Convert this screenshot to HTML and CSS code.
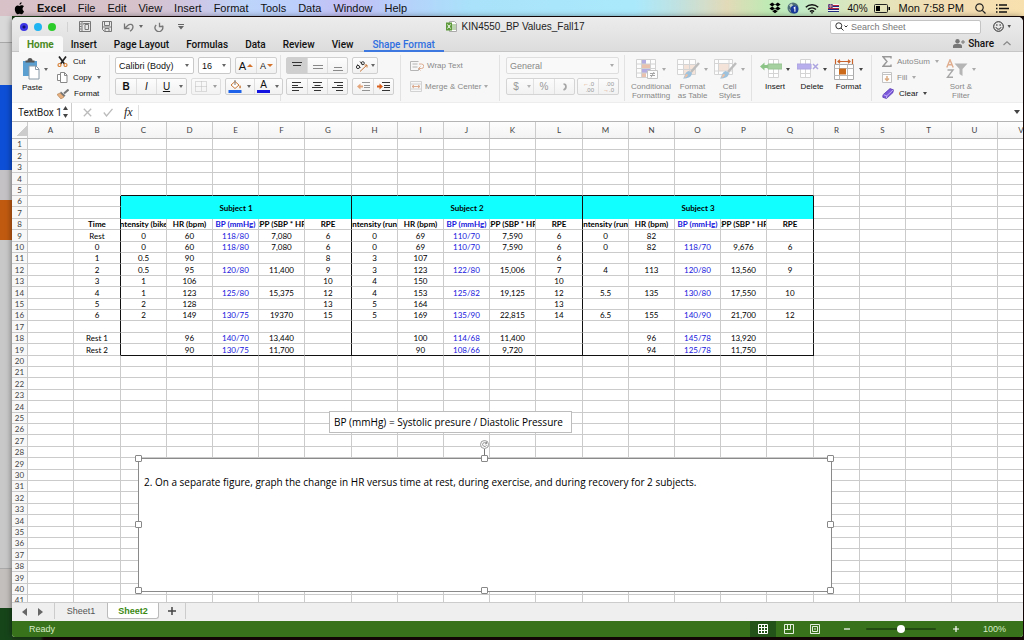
FILE: index.html
```html
<!DOCTYPE html>
<html lang="en">
<head>
<meta charset="utf-8">
<title>KIN4550_BP Values_Fall17</title>
<link rel="stylesheet" href="styles.css">
</head>
<body>
<header class="menubar">
  <svg class="apple" viewBox="0 0 12 14" width="11" height="13"><path d="M8.3 0.2c.1 1.400-1 2.700-2.300 2.700C5.900 1.600 7 .4 8.300.2zM10.900 9.900c-.6 1.700-1.700 3.400-2.800 3.400-.8 0-1.100-.5-2-.5s-1.300.5-2 .5C2.700 13.300.9 10.400.9 7.500.9 4.900 2.500 3.600 4 3.600c.9 0 1.600.6 2.100.6.600 0 1.400-.7 2.500-.7.6 0 1.600.3 2.200 1.200-2.100 1.300-1.700 4.300.1 5.200z"/></svg>
  <nav class="menus">
    <button class="menu menu-app">Excel</button><button class="menu">File</button><button class="menu">Edit</button><button class="menu">View</button><button class="menu">Insert</button><button class="menu">Format</button><button class="menu">Tools</button><button class="menu">Data</button><button class="menu">Window</button><button class="menu">Help</button>
  </nav>
  <div class="extras">
    <svg viewBox="0 0 12 12" width="12" height="12"><path d="M3.200.5 6 2.500 3.200 4.500.4 2.500zM8.800.5l2.800 2-2.800 2L6 2.500zM3.200 4.600 6 6.600 3.200 8.600.4 6.600zM8.800 4.600l2.800 2-2.800 2L6 6.600zM3.300 9.200 6 7.400l2.700 1.800L6 11.200z"/></svg>
    <svg viewBox="0 0 12 12" width="12" height="12"><circle cx="6" cy="6" r="5.500" fill="#4c6f78"/><path d="M2 3l3-1.500L6 4 4 6zM1.500 7l2 1 1 2.500z" fill="#b9cfc4"/><circle cx="7.500" cy="7.500" r="3.900" fill="#173a9c"/><path d="M6.700 6.200 7.900 5.300V9.800" stroke="#fff" stroke-width="1.100" fill="none"/></svg>
    <svg viewBox="0 0 14 11" width="14" height="11" fill="none" stroke="#111" stroke-width="1.500"><path d="M.8 4.200a9 9 0 0 1 12.400 0M3 6.500a6 6 0 0 1 8 0M5 8.600a3 3 0 0 1 4 0"/><circle cx="7" cy="9.800" r=".6" fill="#111" stroke-width=".6"/></svg>
    <svg class="flag" viewBox="0 0 11 8" width="11" height="8"><path fill="#f4f4f4" d="M0 0h11v8H0z"/><path stroke="#b8243a" d="M0 1.500h11M0 4.500h11"/><path stroke="#202a80" d="M0 2.500h11M0 5.500h11M0 7.500h11"/><path fill="#25307e" d="M0 0h5v4H0z"/><path d="M0 0l5 4M5 0 0 4M2.500 0v4M0 2h5" stroke="#d8909c" stroke-width=".7"/></svg>
    <span class="pct">40%</span>
    <svg viewBox="0 0 16 9" width="16" height="9"><rect x=".5" y=".5" width="13" height="8" rx="1" fill="none" stroke="#222"/><path d="M2 2h4v5H2zM14.500 3H16v3h-1.500z"/></svg>
    <span class="clock">Mon 7:58 PM</span>
    <svg viewBox="0 0 11 11" width="11" height="11" fill="none" stroke="#222" stroke-width="1.200"><circle cx="4.500" cy="4.500" r="3.700"/><path d="M7.300 7.300 10.500 10.500"/></svg>
    <svg class="list-icon" viewBox="0 0 13 9" width="13" height="9" stroke="#111" stroke-width="1.500"><path d="M0 1h1.500M3 1h8M0 4.500h1.500M3 4.500h10M0 8h1.500M3 8h8"/></svg>
  </div>
</header>
<main class="desktop">
<section class="window">
  <div class="titlebar">
    <div class="title-side">
      <div class="lights"><i class="light light-a"></i><i class="light light-b"></i><i class="light light-c"></i></div>
      <div class="quick">
        <svg viewBox="0 0 12 11" width="12" height="11" fill="none" stroke="#777"><path d="M.5.500h11v10H.5zM3 .5v10M4.500 3.500v-1h6M6 3.500h3.500v5H6zM1 3h1.500M1 5.500h1.500M1 8h1.500"/></svg>
        <svg viewBox="0 0 10 11" width="10" height="11" fill="none" stroke="#777"><path d="M.5.500h9v10h-7l-2-2zM2.500.500v4h5v-4M3 10.500V7.500h4v3M.5 6h9"/></svg>
        <svg viewBox="0 0 20 10" width="20" height="10" fill="none" stroke="#777" stroke-width="1.300"><path d="M1.500 1.500v5h5M1.500 6.500 5 3.200c2-1.700 5-.8 5 1.600C10 6.500 9 8 7 9.200"/><path d="M16 3h4l-2 3z" fill="#666" stroke="none"/></svg>
        <svg viewBox="0 0 10 10" width="10" height="10" fill="none" stroke="#777" stroke-width="1.300"><path d="M2.200 3A3.800 3.800 0 1 0 8 3.500M5.500.8v3.700H9.500"/></svg>
        <svg class="more" viewBox="0 0 6 6" width="6" height="6"><path d="M0 0h6v1H0zM0 2h6L3 5.500z" fill="#666"/></svg>
      </div>
    </div>
    <h1 class="doc-title"><svg viewBox="0 0 11 11" width="11" height="11"><path d="M3.500.5h5l2 2v8h-7z" fill="#fff" stroke="#aaa"/><path d="M6 4h4M6 6h4M6 8h4" stroke="#7aa860"/><path d="M0 1.500h6v8H0z" fill="#5f9b3c"/><path d="M1.500 3.500l3 4M4.500 3.500l-3 4" stroke="#fff"/></svg>KIN4550_BP Values_Fall17</h1>
    <div class="title-side title-right">
      <label class="search"><svg viewBox="0 0 13 9" width="13" height="9" fill="none" stroke="#333"><circle cx="3.800" cy="3.800" r="3"/><path d="M6 6l2.500 2.500M9.500 3.500l1.500 1.500 1.500-1.500"/></svg><input type="search" placeholder="Search Sheet" aria-label="Search Sheet"></label>
      <button class="smile" aria-label="Feedback"><svg viewBox="0 0 18 11" width="18" height="11" fill="none" stroke="#222"><circle cx="5.500" cy="5.500" r="4.800"/><path d="M3 6.200c.6 2.600 4.400 2.600 5 0"/><circle cx="3.900" cy="4" r=".4" fill="#222" stroke-width=".6"/><circle cx="7.100" cy="4" r=".4" fill="#222" stroke-width=".6"/><path d="M14.500 4h3.500l-1.800 3z" fill="#555" stroke="none"/></svg></button>
    </div>
  </div>
  <nav class="tabs">
    <button class="tab tab-active">Home</button><button class="tab">Insert</button><button class="tab">Page Layout</button><button class="tab">Formulas</button><button class="tab">Data</button><button class="tab">Review</button><button class="tab">View</button><button class="tab tab-context">Shape Format</button>
    <button class="share"><svg viewBox="0 0 12 9" width="12" height="9" fill="#777"><circle cx="4.500" cy="2.300" r="2.200"/><path d="M0 9V7c0-1.500 2-2.300 4.500-2.300S9 5.500 9 7v2z"/><path d="M10 1v4M8 3h4" stroke="#777"/></svg>Share</button>
    <button class="collapse" aria-label="Collapse ribbon"><svg viewBox="0 0 8 5" width="8" height="5"><path d="M.5 4 4 .8 7.500 4" fill="none" stroke="#888" stroke-width="1.200"/></svg></button>
  </nav>
  <div class="ribbon">
    <div class="group g-clip">
      <button class="big"><span class="pic"><svg viewBox="0 0 18 22" width="18" height="22"><path d="M1 3h14v15H1z" fill="#5b9fd0"/><path d="M3.500 4.500V2.500h2a2.500 2.500 0 0 1 5 0h2v2z" fill="#555"/><path d="M7 8h7l3 3v10H7z" fill="#fff" stroke="#8a9aa8"/><path d="M13.500 8v3.500H17" fill="none" stroke="#8a9aa8"/></svg><i class="caret"></i></span>Paste</button>
      <div class="stack">
        <button class="cmd"><svg viewBox="0 0 11 11" width="11" height="11" fill="none"><path d="M2 .5 7.500 8M9 .5 3.500 8" stroke="#222" stroke-width="1.700"/><circle cx="2.500" cy="9" r="1.500" stroke="#d8823a" stroke-width="1.200"/><circle cx="8.500" cy="9" r="1.500" stroke="#d8823a" stroke-width="1.200"/></svg>Cut</button>
        <button class="cmd"><svg viewBox="0 0 11 11" width="11" height="11" fill="#fff" stroke="#888"><path d="M.5 2.500h5v6h-5z"/><path d="M3.500.5h4l2.500 2.500v7.500H3.500zM7.500.500v3H10"/></svg>Copy<i class="caret"></i></button>
        <button class="cmd"><svg viewBox="0 0 12 10" width="12" height="10"><path d="M11.500.5 7 4.500" stroke="#777" stroke-width="2"/><path d="M4 2.500 8.500 6.500 7 8 3 4z" fill="#777"/><path d="M3 4 7 8 4 10 0 5.500z" fill="#e8b080" stroke="#a87848" stroke-width=".6"/></svg>Format</button>
      </div>
    </div>
    <div class="group g-font rows">
      <div class="line">
        <span class="pick pick-font"><select aria-label="Font"><option>Calibri (Body)</option></select><i class="caret"></i></span>
        <span class="pick pick-size"><select aria-label="Font size"><option>16</option></select><i class="caret"></i></span>
        <span class="seg"><button class="b20" aria-label="Grow font"><b class="grow">A</b><i class="up"></i></button><button class="b20" aria-label="Shrink font"><b class="shrink">A</b><i class="down"></i></button></span>
      </div>
      <div class="line">
        <span class="seg"><button class="b20"><b>B</b></button><button class="b20"><em>I</em></button><button class="b20"><u>U</u></button><button class="b9" aria-label="Underline style"><i class="caret"></i></button></span>
        <span class="seg faded"><button class="b18" aria-label="Borders"><svg viewBox="0 0 12 11" width="12" height="11" fill="none" stroke="#999" stroke-dasharray="1 1"><path d="M.5.500h11v10H.5zM6.500.500v10M.5 5.500h11"/></svg></button><button class="b9" aria-label="Border style"><i class="caret"></i></button></span>
        <span class="seg"><button class="b18" aria-label="Fill color"><svg viewBox="0 0 14 13" width="14" height="13"><path d="M3 5 7 1.500l4 3.500-4 3.500z" fill="#fff" stroke="#c87838"/><path d="M7 0v5" stroke="#777"/><path d="M12 5c1.500 2 1 3 0 3.500-1-.5-1-2 0-3.500z" fill="#c87838"/><path fill="#1d62e8" d="M.5 10h13v3H.5z"/></svg></button><button class="b9" aria-label="Fill options"><i class="caret"></i></button><button class="b18" aria-label="Font color"><span class="fontcolor">A</span></button><button class="b9" aria-label="Color options"><i class="caret"></i></button></span>
      </div>
    </div>
    <div class="group g-align rows">
      <div class="line">
        <span class="seg"><button class="b20 pressed" aria-label="Top align"><svg viewBox="0 0 10 12" width="10" height="12" stroke="#333"><path d="M0 2.500h10M1 5.500h8"/></svg></button><button class="b20" aria-label="Middle align"><svg viewBox="0 0 10 12" width="10" height="12" stroke="#888"><path d="M0 5.500h10M0 8.500h10"/></svg></button><button class="b20" aria-label="Bottom align"><svg viewBox="0 0 10 12" width="10" height="12" stroke="#888"><path d="M1 7.500h8M0 10.500h10"/></svg></button></span>
        <span class="seg"><button class="b25" aria-label="Orientation"><svg viewBox="0 0 14 12" width="14" height="12" fill="none" stroke="#333"><circle cx="3" cy="7" r="1.600"/><path d="M2.500 4.500 5.500 7.500M5 1.500 8 5"/><circle cx="7.800" cy="3.200" r="1.500"/><path d="M5 11.500 12 5M12 5v2.500M12 5H9.500" stroke="#c8783c"/></svg><i class="caret"></i></button></span>
      </div>
      <div class="line">
        <span class="seg"><button class="b20" aria-label="Align left"><svg viewBox="0 0 11 9" width="11" height="9" stroke="#333"><path d="M0 .5h9M0 3.500h6M0 5.500h11M0 8.500h7"/></svg></button><button class="b20" aria-label="Center"><svg viewBox="0 0 11 9" width="11" height="9" stroke="#333"><path d="M1 .5h9M2.500 3.500h6M0 5.500h11M2 8.500h7"/></svg></button><button class="b20" aria-label="Align right"><svg viewBox="0 0 11 9" width="11" height="9" stroke="#333"><path d="M2 .5h9M5 3.500h6M0 5.500h11M4 8.500h7"/></svg></button></span>
        <span class="seg"><button class="b20 faded" aria-label="Decrease indent"><svg viewBox="0 0 13 9" width="13" height="9" stroke="#555"><path d="M5 .5h8M7 3.500h6M7 5.500h6M5 8.500h8"/><path d="M0 4.500 3.500 1.500v2H6v2H3.500v2z" fill="#d8722c" stroke="none"/></svg></button><button class="b20" aria-label="Increase indent"><svg viewBox="0 0 13 9" width="13" height="9" stroke="#333"><path d="M5 .5h8M7 3.500h6M7 5.500h6M5 8.500h8"/><path d="M6 4.500 2.500 1.500v2H0v2h2.500v2z" fill="#d8601c" stroke="none"/></svg></button></span>
      </div>
    </div>
    <div class="group g-wrap rows dim">
      <button class="cmd tall"><svg viewBox="0 0 14 10" width="14" height="10" fill="none" stroke="#aaa"><path d="M.5.500h8M.5.500v9h8v-2M2.500 3h5M2.500 6h5"/><path d="M9 3h2.500a2 2 0 0 1 0 4.500H8.500M10.500 5.500l-2 2 2 2" stroke="#d8a080"/></svg>Wrap Text</button>
      <button class="cmd tall"><svg viewBox="0 0 12 11" width="12" height="11" fill="none" stroke="#aaa"><path d="M.5.500h11v10H.5zM.5 3h11M.5 8h11" stroke="#ccc"/><path d="M2 5.500h8M4 4 2 5.500 4 7M8 4l2 1.500L8 7" stroke="#d8a080"/></svg>Merge &amp; Center<i class="caret"></i></button>
    </div>
    <div class="group g-num rows dim">
      <div class="line"><span class="pick pick-num"><select aria-label="Number format"><option>General</option></select><i class="caret"></i></span></div>
      <div class="line"><span class="seg"><button class="b18">$</button><button class="b8" aria-label="Currency options"><i class="caret"></i></button><button class="b21">%</button><button class="b20" aria-label="Comma style"><svg viewBox="0 0 6 8" width="6" height="8"><path d="M1.500 1C4.500 1 5 5.500 1.500 7" fill="none" stroke="#888" stroke-width="1.700"/></svg></button></span>
      <span class="seg"><button class="b20 dec" aria-label="Increase decimal"><span><i class="arr">&#8592;</i>.0</span><span>.00</span></button><button class="b20 dec" aria-label="Decrease decimal"><span>.00</span><span><i class="arr">&#8594;</i>.0</span></button></span></div>
    </div>
    <div class="group g-style dim">
      <button class="big wide"><span class="pic"><svg viewBox="0 0 22 21" width="22" height="21"><path d="M.5.500h19v18H.5z" fill="#fff"/><path d="M6 1h4v4H6zM6 10h8v4H6z" fill="#a8a0e0"/><path d="M6 5h8v5H6zM6 14h4v4H6z" fill="#e8b8a0"/><path d="M.5.500h19v18H.5zM5.500.500v18M14.500.500v18M.5 5h19M.5 9.500h19M.5 14h19" fill="none" stroke="#ccc"/><path d="M11.500 11.500h10v8h-10z" fill="#fff" stroke="#bbb"/><path d="M14 14.500h5M14 16.500h5M18 13l-3 5.500" stroke="#999"/></svg><i class="caret"></i></span>Conditional<br>Formatting</button>
      <button class="big"><span class="pic"><svg viewBox="0 0 23 21" width="23" height="21"><path d="M.5.500h18v15H.5z" fill="#fff"/><path d="M6 5h12v10H6z" fill="#f4e0d4"/><path d="M.5.500h18v15H.5zM6.500.500v15M12.500.500v15M.5 5.500h18M.5 10.500h18" fill="none" stroke="#d0d0d0"/><path d="M22 4 14 13" stroke="#b4b4b4" stroke-width="2.500"/><path d="M15 13.500c0 4.500-4 6-9 6 2-2 1.500-6 5.500-7.500z" fill="#8fb8d8"/><path d="M11 15.500c0 2-2 3-4 3.500 1.500-1.500 1-3 2-4z" fill="#e8b898"/></svg><i class="caret"></i></span>Format<br>as Table</button>
      <button class="big"><span class="pic"><svg viewBox="0 0 23 21" width="23" height="21"><path d="M.5.500h18v15H.5z" fill="#fff"/><path d="M4 4h11v8H4z" fill="#f4e0d4"/><path d="M.5.500h18v15H.5zM4.500.500v15M.5 4.500h18M15 .5v15M.5 12h18" fill="none" stroke="#d0d0d0"/><path d="M22 4 14 13" stroke="#b4b4b4" stroke-width="2.500"/><path d="M15 13.500c0 4.500-4 6-9 6 2-2 1.500-6 5.500-7.500z" fill="#8fb8d8"/><path d="M11 15.500c0 2-2 3-4 3.500 1.500-1.500 1-3 2-4z" fill="#e8b898"/></svg><i class="caret"></i></span>Cell<br>Styles</button>
    </div>
    <div class="group g-cells">
      <button class="big"><span class="pic"><svg viewBox="0 0 22 20" width="22" height="20"><path d="M8.500.500h10v18h-10zM13.500.500v18M8.500 14.500h10" fill="#fff" stroke="#d4d4d4"/><path d="M8 5h14v5H8z" fill="#a5d0a0" stroke="#98c494"/><path d="M0 7.500 4.500 3.500V6H8v3H4.500v2.500z" fill="#8cc488"/></svg><i class="caret dark"></i></span>Insert</button>
      <button class="big"><span class="pic"><svg viewBox="0 0 22 20" width="22" height="20"><path d="M3.500.500h10v18h-10zM8.500.500v18M3.500 14.500h10" fill="#fff" stroke="#d4d4d4"/><path d="M0 5h14v5H0z" fill="#b8aeee" stroke="#aca4e0"/><path d="M16 5l5 5M21 5l-5 5" stroke="#aca4e0" stroke-width="1.500"/></svg><i class="caret dark"></i></span>Delete</button>
      <button class="big"><span class="pic"><svg viewBox="0 0 21 21" width="21" height="21"><path d="M.5 5.500h19v15H.5z" fill="#fff" stroke="#aaa"/><path d="M5.500 5.500v15M13.500 5.500v15M.5 9.500h19M.5 16.500h19" stroke="#bbb"/><path d="M5 9.500h7v6H5z" fill="#cc6a1c"/><path d="M1.500 0v5M18.500 0v5M4 2.500h12M6 .8 4 2.500l2 1.700M14 .8l2 1.700-2 1.700" fill="none" stroke="#c8642c" stroke-width="1.200"/></svg><i class="caret dark"></i></span>Format</button>
    </div>
    <div class="group g-edit">
      <div class="stack">
        <button class="cmd dim"><svg viewBox="0 0 10 11" width="10" height="11"><path d="M9 2.500V.8H1l4 4.700-4 4.700h8V8.500" fill="none" stroke="#888" stroke-width="1.400"/></svg>AutoSum<i class="caret"></i></button>
        <button class="cmd dim"><svg viewBox="0 0 10 11" width="10" height="11"><path d="M.5.500h9v10h-9zM.5 2.500h9" fill="#fff" stroke="#bbb"/><path d="M5 4v4M3 6.500l2 2 2-2" fill="none" stroke="#d8a070" stroke-width="1.500"/></svg>Fill<i class="caret"></i></button>
        <button class="cmd"><svg viewBox="0 0 12 11" width="12" height="11"><path d="M8 .6 11.400 1.800 11 4.500 4.500 10.500.8 9.300 1 6.800z" fill="#7c58dc" stroke="#5a3eb0" stroke-width=".8"/><path d="M1.500 6.800 4.800 7.800 11 2M4.800 7.800l-.3 2.300" stroke="#d0c4f8" stroke-width=".8" fill="none"/></svg>Clear<i class="caret dark"></i></button>
      </div>
      <button class="big dim sort"><span class="pic"><svg viewBox="0 0 22 20" width="22" height="20"><g fill="none" stroke-width="1.400"><path d="M.8 8.500 4 .8 7.200 8.500M2 5.800h4" stroke="#dca07c"/><path d="M1.500 11h5.500L1.500 18.200H7" stroke="#999"/></g><path d="M8.500 4.500h13l-5 5.500v7l-3-2v-5z" fill="#aaa"/></svg><i class="caret"></i></span>Sort &amp;<br>Filter</button>
    </div>
  </div>
  <div class="formulabar">
    <label class="namebox"><input type="text" value="TextBox 1" aria-label="Name box"><svg viewBox="0 0 5 12" width="5" height="12" fill="#444"><path d="M0 4 2.500 0 5 4zM0 8h5l-2.500 4z"/></svg></label>
    <svg viewBox="0 0 9 9" width="9" height="9" fill="none" stroke="#bbb" stroke-width="1.300"><path d="M.8.800 8.200 8.200M8.200.800.8 8.200"/></svg>
    <svg viewBox="0 0 10 9" width="10" height="9" fill="none" stroke="#bbb" stroke-width="1.300"><path d="M.8 4.500 3.500 8 9.500.800"/></svg>
    <span class="fx">fx</span>
    <input class="formula" type="text" aria-label="Formula">
    <i class="caret dark bigger"></i>
  </div>
  <div class="sheet">
    <table class="grid" id="grid"></table>
    <div class="note">BP (mmHg) = Systolic presure / Diastolic Pressure</div>
    <div class="shape">2. On a separate figure, graph the change in HR versus time at rest, during exercise, and during recovery for 2 subjects.
      <i class="h nw"></i><i class="h n"></i><i class="h ne"></i><i class="h w"></i><i class="h e"></i><i class="h sw"></i><i class="h s"></i><i class="h se"></i>
      <svg class="rotate" viewBox="0 0 9 15" width="9" height="15" fill="none" stroke="#777"><path d="M4.500 9v6"/><circle cx="4.500" cy="4.500" r="4" fill="#fff" stroke="#999"/><path d="M6.200 3.200a2 2 0 1 0 .3 2M6.500 1.800v2H4.800" stroke-width=".8"/></svg>
    </div>
  </div>
  <div class="sheettabs">
    <button class="nav" aria-label="Previous sheet"><svg viewBox="0 0 5 8" width="5" height="8"><path d="M5 0v8L0 4z" fill="#666"/></svg></button>
    <button class="nav" aria-label="Next sheet"><svg viewBox="0 0 5 8" width="5" height="8"><path d="M0 0v8l5-4z" fill="#666"/></svg></button>
    <button class="stab">Sheet1</button><button class="stab stab-on">Sheet2</button><button class="add" aria-label="Add sheet"><svg viewBox="0 0 8 8" width="8" height="8"><path d="M4 0v8M0 4h8" stroke="#444" stroke-width="1.500"/></svg></button>
  </div>
  <footer class="status">
    <span class="ready">Ready</span>
    <button class="view view-on" aria-label="Normal view"><svg viewBox="0 0 10 10" width="10" height="10" fill="none" stroke="#fff"><path d="M.5.500h9v9h-9zM3.500.500v9M6.500.500v9M.5 3.500h9M.5 6.500h9"/></svg></button>
    <button class="view" aria-label="Page layout view"><svg viewBox="0 0 10 10" width="10" height="10" fill="none" stroke="#e4eedd"><path d="M.5.500h9v9h-9zM3.500.500v5M6.500.500v5h-6"/></svg></button>
    <button class="view" aria-label="Page break view"><svg viewBox="0 0 10 10" width="10" height="10" fill="none" stroke="#e4eedd"><path d="M.5.500h9v9h-9zM2.500 2.500h5v5h-5zM4 5h2"/></svg></button>
    <button class="zoomstep" aria-label="Zoom out"><svg viewBox="0 0 6 6" width="6" height="6"><path d="M0 3h6" stroke="#fff" stroke-width="1.200"/></svg></button>
    <input class="zoom" type="range" min="0" max="200" value="100" aria-label="Zoom">
    <button class="zoomstep" aria-label="Zoom in"><svg viewBox="0 0 6 6" width="6" height="6"><path d="M0 3h6M3 0v6" stroke="#fff" stroke-width="1.200"/></svg></button>
    <span class="zoompct">100%</span>
  </footer>
</section>
</main>
<script src="grid.js"></script>
</body>
</html>
```
FILE: styles.css
```css
* { box-sizing: border-box; }
body {
  margin: 0;
  height: 100vh;
  display: flex;
  flex-direction: column;
  overflow: hidden;
  font-family: "Liberation Sans", Arial, sans-serif;
  font-size: 8px;
  color: #222;
}
button, input, select {
  font: inherit;
  color: inherit;
  background: none;
  border: 0;
  padding: 0;
  margin: 0;
  appearance: none;
  outline: 0;
}
button { display: flex; align-items: center; justify-content: center; white-space: nowrap; }
svg { flex: none; display: block; }

.menubar {
  height: 16px;
  flex: none;
  display: flex;
  align-items: center;
  padding: 0 12px 0 14px;
  font-size: 11px;
  color: #111;
  background: linear-gradient(90deg, #d9c1c8 0%, #d6c2cb 14%, #cfc6e4 19%, #bdd4fa 24%, #bccffc 29%, #c3bdf2 34%, #b9cdfa 38%, #a9e2fa 46%, #aae9fc 62%, #bfe2e2 66%, #e2dab8 71%, #bfeab4 75%, #c2ecc6 78%, #dfe6bd 84%, #f3ddb4 92%, #f8e0ae 100%);
}
.menus { display: flex; gap: 12px; margin-left: 12px; }
.menu-app { font-weight: bold; }
.extras { margin-left: auto; display: flex; align-items: center; gap: 6px; font-size: 10px; }
.flag { margin: 0 3px; }
.clock { font-size: 11px; margin: 0 5px 0 3px; }
.list-icon { margin: 0 3px 0 4px; }

.desktop {
  flex: 1;
  min-height: 0;
  padding: 1px 1px 3px 12px;
  background:
    linear-gradient(180deg, #d9d9d9 0 26px, #a8a8a8 26px 27px, #cfcfcf 27px 69px, #0d4fd6 69px 154px, #c4c2c4 154px 184px, #c05a10 184px 224px, #c8c8c8 224px 552px, #a9a9a9 552px 553px, #c2bfbd 553px 592px, #17451a 592px) 0 0 / 12px 100% no-repeat,
    linear-gradient(90deg, #1c4018 0 40px, #160606 44px);
}
.window {
  height: 100%;
  display: flex;
  flex-direction: column;
  overflow: hidden;
  border-radius: 5px 5px 3px 3px;
  background: #fff;
  box-shadow: 0 0 6px rgba(0, 0, 0, .5);
}

.titlebar {
  height: 19px;
  flex: none;
  display: grid;
  grid-template-columns: 1fr auto 1fr;
  align-items: center;
  padding: 0 12px 0 8px;
  background: linear-gradient(#ececec, #e4e4e4);
}
.title-side { display: flex; align-items: center; }
.title-right { justify-content: flex-end; }
.lights { display: flex; gap: 6px; height: 10px; width: 48px; align-items: center; border-right: 1px solid #d2d2d2; margin-right: 11px; }
.light { width: 8px; height: 8px; border-radius: 50%; }
.light-a { background: radial-gradient(#101070 0 1px, #3b35e6 2px); }
.light-b { background: #1eb4f2; }
.light-c { background: #2bcc2a; }
.quick { display: flex; align-items: center; gap: 11px; }
.more { margin-left: 3px; }
.doc-title { margin: 0; display: flex; align-items: center; gap: 4px; font-size: 10px; font-weight: normal; }
.search {
  width: 151px;
  height: 14px;
  display: flex;
  align-items: center;
  gap: 3px;
  padding: 0 4px;
  margin-right: 12px;
  background: #fff;
  border: 1px solid #c4c4c4;
  border-radius: 2px;
  font-size: 9px;
}
.search input { flex: 1; min-width: 0; }
.search input::placeholder { color: #777; opacity: 1; }

.tabs {
  height: 16px;
  flex: none;
  display: flex;
  padding: 0 12px 0 7px;
  font-family: Roboto, "Liberation Sans", sans-serif;
  font-size: 10px;
  font-weight: 500;
  color: #111;
  background: linear-gradient(#e4e4e4, #dcdcdc);
  border-bottom: 1px solid #c6c6c6;
}
.tab { padding: 0 9px 0 8px; height: 16px; }
.tab-active { color: #4a8a1e; background: #f9f9f9; border-radius: 3px 3px 0 0; font-weight: 700; }
.tab-context { color: #2f6fe0; border-bottom: 2px solid #3c78e0; padding-top: 2px; margin-left: 2px; }
.share { margin-left: auto; gap: 3px; }
.collapse { margin-left: 9px; }

.ribbon {
  height: 51px;
  flex: none;
  display: grid;
  grid-template-columns: 98px 171px 120px 99px 125px 127px 120px 1fr;
  background: #f7f7f7;
  border-bottom: 1px solid #ededed;
}
.group { display: flex; min-width: 0; margin: 3px 0; padding: 2px 0 1px 5px; border-right: 1px solid #e2e2e2; color: #111; }
.group:last-child { border-right: 0; }
.rows { flex-direction: column; gap: 4px; }
.line { display: flex; gap: 4px; }
.group.dim, .dim { color: #888; }
.dim svg, .dim .seg, .dim .arr { opacity: .85; }
.g-clip { padding-left: 10px; gap: 9px; }
.stack { display: flex; flex-direction: column; gap: 5px; margin-top: -1px; }
.cmd { justify-content: flex-start; gap: 5px; height: 11px; }
.tall { height: 17px; gap: 3px; }
.big { flex-direction: column; justify-content: flex-start; line-height: 9px; }
.pic { display: flex; align-items: center; gap: 4px; height: 24px; margin-bottom: 1px; }
.g-clip .big { align-items: flex-start; line-height: 11px; }
.caret { flex: none; width: 0; height: 0; border: 2px solid transparent; border-top: 3px solid #666; border-bottom: 0; }
.dim .caret { border-top-color: #aaa; }
.dark.caret { border-top-color: #444; }
.bigger.caret { border-width: 4px 3px 0; }
.pick {
  display: flex;
  align-items: center;
  height: 17px;
  padding: 0 4px 0 3px;
  border: 1px solid #c9c9c9;
  border-radius: 2px;
  background: #fff;
  font-size: 9px;
}
.pick select { flex: 1; min-width: 0; }
.pick-font { width: 79px; }
.pick-size { width: 33px; }
.pick-num { width: 113px; background: #f9f9f9; border-color: #dedede; }
.seg { display: flex; height: 17px; border: 1px solid #cfcfcf; border-radius: 2px; background: linear-gradient(#fdfdfd, #f1f1f1); font-size: 10px; }
.seg button { border-left: 1px solid #dedede; }
.seg button:first-child { border-left: 0; }
.seg .pressed { background: #cfcfcf; }
.seg .b9, .seg .b8 { border-left: 0; }
.b8 { width: 8px; }
.b9 { width: 10px; }
.b18 { width: 18px; }
.b20 { width: 20px; }
.b21 { width: 21px; }
.b25 { width: 24px; gap: 2px; }
.faded { opacity: .6; }
.seg .grow { font-size: 11px; font-weight: normal; }
.seg .shrink { font-size: 9px; font-weight: normal; }
.up, .down { width: 0; height: 0; border: 3px solid transparent; border-bottom: 3px solid #d4722c; border-top: 0; margin-left: 1px; }
.down { border-top: 3px solid #d4722c; border-bottom: 0; }
.fontcolor { width: 13px; line-height: 10px; border-bottom: 3px solid #1414e0; }
.seg .dec { flex-direction: column; align-items: flex-end; padding-right: 4px; font-size: 6px; line-height: 6px; }
.arr { color: #d8722c; font-style: normal; }
.g-num { padding-left: 6px; }
.g-num .line { gap: 2px; }
.g-wrap { padding-left: 9px; }
.g-style { gap: 6px; padding-left: 6px; }
.g-cells { padding-left: 8px; gap: 7px; }
.g-cells .big { line-height: 10px; }
.g-edit { padding-left: 10px; gap: 7px; }

.formulabar {
  height: 19px;
  flex: none;
  display: flex;
  align-items: center;
  gap: 11px;
  padding-right: 3px;
  border-bottom: 1px solid #b4b4b4;
  background: #fff;
}
.namebox { width: 60px; height: 18px; display: flex; align-items: center; padding: 0 3px 0 6px; border-right: 1px solid #ccc; font: 10px Roboto, Lato, sans-serif; }
.namebox input { flex: 1; min-width: 0; }
.fx { font: italic 12px "Liberation Serif", serif; border-right: 1px solid #e0e0e0; padding-right: 5px; }
.formula { flex: 1; min-width: 0; }

.sheet { flex: 1; min-height: 0; position: relative; overflow: hidden; background: #fff; font-family: Lato, "Liberation Sans", sans-serif; }
.grid { border-collapse: separate; border-spacing: 0; table-layout: fixed; width: 0; line-height: 10px; color: #000; }
.grid .rowhead { width: 16px; }
.grid .col { width: 46px; }
.grid .col-wide { width: 47px; }
.grid th, .grid td { padding: 0; height: 11px; border: 0 solid #cbcbcb; border-width: 0 1px 1px 0; text-align: center; font-weight: normal; overflow: hidden; }
.grid tr.tall-row > * { height: 12px; }
.grid thead th { height: 17px; color: #444; background: linear-gradient(#fdfdfd, #f3f3f3); border-bottom-color: #b8b8b8; }
.grid tbody th { color: #444; background: #f8f8f8; border-right-color: #c8c8c8; }
.corner { background: linear-gradient(135deg, transparent 50%, #ccc 50%) 5px 4px / 10px 10px no-repeat, #fafafa; width: 100%; height: 16px; display: block; }
.grid .v { display: flex; justify-content: center; white-space: nowrap; overflow: hidden; height: 10px; }
.grid .bp { color: #1414dc; }
.grid .hd { font-weight: bold; }
.grid .subject { background: #12ffff; font-weight: bold; border-bottom: 0; }
.grid .edge-r { border-right-color: #111; }
.grid .edge-b { border-bottom-color: #111; }
.note, .shape { position: absolute; background: #fff; font-family: "Open Sans", Lato, sans-serif; font-size: 10px; line-height: 14px; color: #000; white-space: nowrap; }
.note { left: 317px; top: 289px; padding: 3px 8px 3px 4px; border: 1px solid #bdbdbd; }
.shape { left: 126px; top: 336px; width: 694px; height: 134px; padding: 16px 5px; border: 1px solid #8a8a8a; }
.h { position: absolute; width: 7px; height: 7px; background: #fff; border: 1px solid #888; border-radius: 1px; margin: -4px; }
.nw, .n, .ne { top: 0; }
.w, .e { top: 50%; }
.sw, .s, .se { top: 100%; }
.nw, .w, .sw { left: 0; }
.n, .s { left: 50%; }
.ne, .e, .se { left: 100%; }
.rotate { position: absolute; left: 50%; top: -19px; margin-left: -5px; }

.sheettabs { height: 19px; flex: none; display: flex; align-items: flex-start; padding-left: 4px; background: #efefef; border-top: 1px solid #ccc; font-size: 9px; color: #555; }
.nav { width: 16px; height: 17px; }
.nav + .stab { margin-left: 6px; }
.stab { height: 16px; width: 53px; border-left: 1px solid #ccc; }
.stab-on { width: 52px; color: #3c8a12; font-weight: bold; background: #fff; border: 1px solid #bbb; border-top: 0; border-radius: 0 0 3px 3px; }
.add { width: 27px; height: 16px; border-right: 1px solid #ccc; }

.status { height: 16px; flex: none; display: flex; align-items: center; padding: 0 17px; background: #38721a; color: #d8ecc8; font-size: 9px; }
.ready { flex: 1; }
.view { width: 26px; height: 16px; }
.view-on { background: #24531a; }
.zoomstep { width: 13px; height: 16px; margin-left: 13px; }
.view + .zoomstep { margin-left: 12px; }
.zoom { width: 70px; height: 16px; margin-left: 13px; }
.zoom::-webkit-slider-runnable-track { height: 2px; background: #224b12; border-radius: 1px; }
.zoom::-webkit-slider-thumb { appearance: none; width: 8px; height: 8px; margin-top: -3px; border-radius: 50%; background: #fff; }
.zoompct { margin-left: 19px; min-width: 25px; text-align: right; }
```
FILE: grid.js
```js
const COLUMNS = 'ABCDEFGHIJKLMNOPQRSTUV'.split('');
const ROWS = 41;
const BP = ['E', 'J', 'O'];

// Values from column B through Q, keyed by sheet row.
const DATA = {
  8: 'Time|Intensity (bike)|HR (bpm)|BP (mmHg)|RPP (SBP * HR)|RPE|Intensity (run)|HR (bpm)|BP (mmHg)|RPP (SBP * HR)|RPE|Intensity (run)|HR (bpm)|BP (mmHg)|RPP (SBP * HR)|RPE',
  9: 'Rest|0|60|118/80|7,080|6|0|69|110/70|7,590|6|0|82|||',
  10: '0|0|60|118/80|7,080|6|0|69|110/70|7,590|6|0|82|118/70|9,676|6',
  11: '1|0.5|90|||8|3|107|||6|||||',
  12: '2|0.5|95|120/80|11,400|9|3|123|122/80|15,006|7|4|113|120/80|13,560|9',
  13: '3|1|106|||10|4|150|||10|||||',
  14: '4|1|123|125/80|15,375|12|4|153|125/82|19,125|12|5.5|135|130/80|17,550|10',
  15: '5|2|128|||13|5|164|||13|||||',
  16: '6|2|149|130/75|19370|15|5|169|135/90|22,815|14|6.5|155|140/90|21,700|12',
  18: 'Rest 1||96|140/70|13,440|||100|114/68|11,400|||96|145/78|13,920|',
  19: 'Rest 2||90|130/75|11,700|||90|108/66|9,720|||94|125/78|11,750|'
};

const table = document.getElementById('grid');
let html = '<colgroup><col class="rowhead">';
COLUMNS.forEach((c, i) => { html += `<col class="${i % 5 === 1 ? 'col-wide' : 'col'}">`; });
html += '</colgroup><thead><tr><th><i class="corner"></i></th>';
COLUMNS.forEach(c => { html += `<th scope="col">${c}</th>`; });
html += '</tr></thead><tbody>';

for (let r = 1; r <= ROWS; r++) {
  const values = (DATA[r] || '').split('|');
  html += `<tr${r % 5 === 2 || r % 5 === 4 ? ' class="tall-row"' : ''}><th scope="row">${r}</th>`;
  COLUMNS.forEach((c, i) => {
    const inBlock = i >= 2 && i <= 16;
    if (inBlock && (r === 6 || r === 7)) {
      if (r === 6 && i % 5 === 2) {
        html += `<td class="subject edge-r" colspan="5" rowspan="2">Subject ${(i + 3) / 5}</td>`;
      }
      return;
    }
    const cls = [];
    if (r >= 6 && r <= 19 && [1, 6, 11, 16].includes(i)) cls.push('edge-r');
    if (inBlock && (r === 5 || r === 19)) cls.push('edge-b');
    if (BP.includes(c)) cls.push('bp');
    if (r === 8) cls.push('hd');
    const text = i > 0 ? values[i - 1] || '' : '';
    html += `<td class="${cls.join(' ')}">${text ? `<div class="v">${text}</div>` : ''}</td>`;
  });
  html += '</tr>';
}
table.innerHTML = html + '</tbody>';
```
